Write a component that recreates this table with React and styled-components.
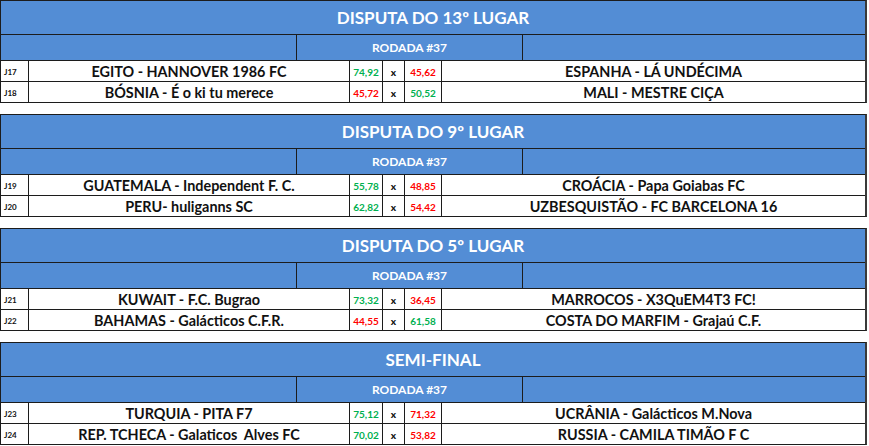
import styled, { createGlobalStyle } from 'styled-components'

const Global = createGlobalStyle`
    body{
        margin:0;
        background:#fff;
        font-family: Lato, "Liberation Sans", sans-serif;
    }
`

const Page = styled.div`
    display:flex;
    flex-direction:column;
    gap:11px;
    width:867px;
`

const Section = styled.div`
    border:1px solid #1c1c1c;
    border-right:2px solid #3a3a3a;
    box-sizing:border-box;
    width:867px;
`

const Title = styled.div`
    height:33px;
    background:#538dd5;
    color:#fff;
    font-weight:700;
    font-size:17px;
    display:flex;
    align-items:center;
    justify-content:center;
    border-bottom:1px solid #1c1c1c;
`

const SubRow = styled.div`
    display:grid;
    grid-template-columns:296px 226px 1fr;
    height:25px;
    background:#538dd5;
    border-bottom:1px solid #1c1c1c;
`

const SubCell = styled.div`
    display:flex;
    align-items:center;
    justify-content:center;
    color:#fff;
    font-weight:700;
    font-size:12px;
    border-right:${p => p.$last ? 'none' : '1px solid #1c1c1c'};
`

const Row = styled.div`
    display:grid;
    grid-template-columns:28px 321px 33px 22px 37px 1fr;
    height:20px;
    border-bottom:${p => p.$last ? 'none' : '1px solid #1c1c1c'};
    background:#fff;
`

const Cell = styled.div`
    display:flex;
    align-items:center;
    justify-content:${p => p.$left ? 'flex-start' : 'center'};
    padding-left:${p => p.$left ? '3px' : '0'};
    padding-top:1px;
    border-right:${p => p.$last ? 'none' : '1px solid #1c1c1c'};
    font-weight:700;
    color:#111;
    white-space:pre;
    overflow:hidden;
`

const Label = styled(Cell)`
    font-size:8px;
`

const Team = styled(Cell)`
    font-size:14.4px;
`

const Score = styled(Cell)`
    font-size:10px;
    color:${p => p.$win ? '#00b050' : '#ff0000'};
`

const Versus = styled(Cell)`
    font-size:10px;
    font-weight:900;
`

const sections = [
    {
        title: 'DISPUTA DO 13º LUGAR',
        games: [
            ['J17', 'EGITO - HANNOVER 1986 FC', '74,92', '45,62', 'ESPANHA - LÁ UNDÉCIMA'],
            ['J18', 'BÓSNIA - É o ki tu merece', '45,72', '50,52', 'MALI - MESTRE CIÇA'],
        ],
    },
    {
        title: 'DISPUTA DO 9º LUGAR',
        games: [
            ['J19', 'GUATEMALA - Independent F. C.', '55,78', '48,85', 'CROÁCIA - Papa Goiabas FC'],
            ['J20', 'PERU- huliganns SC', '62,82', '54,42', 'UZBESQUISTÃO - FC BARCELONA 16'],
        ],
    },
    {
        title: 'DISPUTA DO 5º LUGAR',
        games: [
            ['J21', 'KUWAIT - F.C. Bugrao', '73,32', '36,45', 'MARROCOS - X3QuEM4T3 FC!'],
            ['J22', 'BAHAMAS - Galácticos C.F.R.', '44,55', '61,58', 'COSTA DO MARFIM - Grajaú C.F.'],
        ],
    },
    {
        title: 'SEMI-FINAL',
        games: [
            ['J23', 'TURQUIA - PITA F7', '75,12', '71,32', 'UCRÂNIA - Galácticos M.Nova'],
            ['J24', 'REP. TCHECA - Galaticos  Alves FC', '70,02', '53,82', 'RUSSIA - CAMILA TIMÃO F C'],
        ],
    },
]

const toNum = s => parseFloat(s.replace(',', '.'))

export default function App() {
    return (
        <>
            <Global />
            <Page>
                {sections.map(sec => (
                    <Section key={sec.title}>
                        <Title>{sec.title}</Title>
                        <SubRow>
                            <SubCell />
                            <SubCell>RODADA #37</SubCell>
                            <SubCell $last />
                        </SubRow>
                        {sec.games.map(([id, home, s1, s2, away], i) => (
                            <Row key={id} $last={i === sec.games.length - 1}>
                                <Label $left>{id}</Label>
                                <Team>{home}</Team>
                                <Score $win={toNum(s1) > toNum(s2)}>{s1}</Score>
                                <Versus>x</Versus>
                                <Score $win={toNum(s2) > toNum(s1)}>{s2}</Score>
                                <Team $last>{away}</Team>
                            </Row>
                        ))}
                    </Section>
                ))}
            </Page>
        </>
    )
}
